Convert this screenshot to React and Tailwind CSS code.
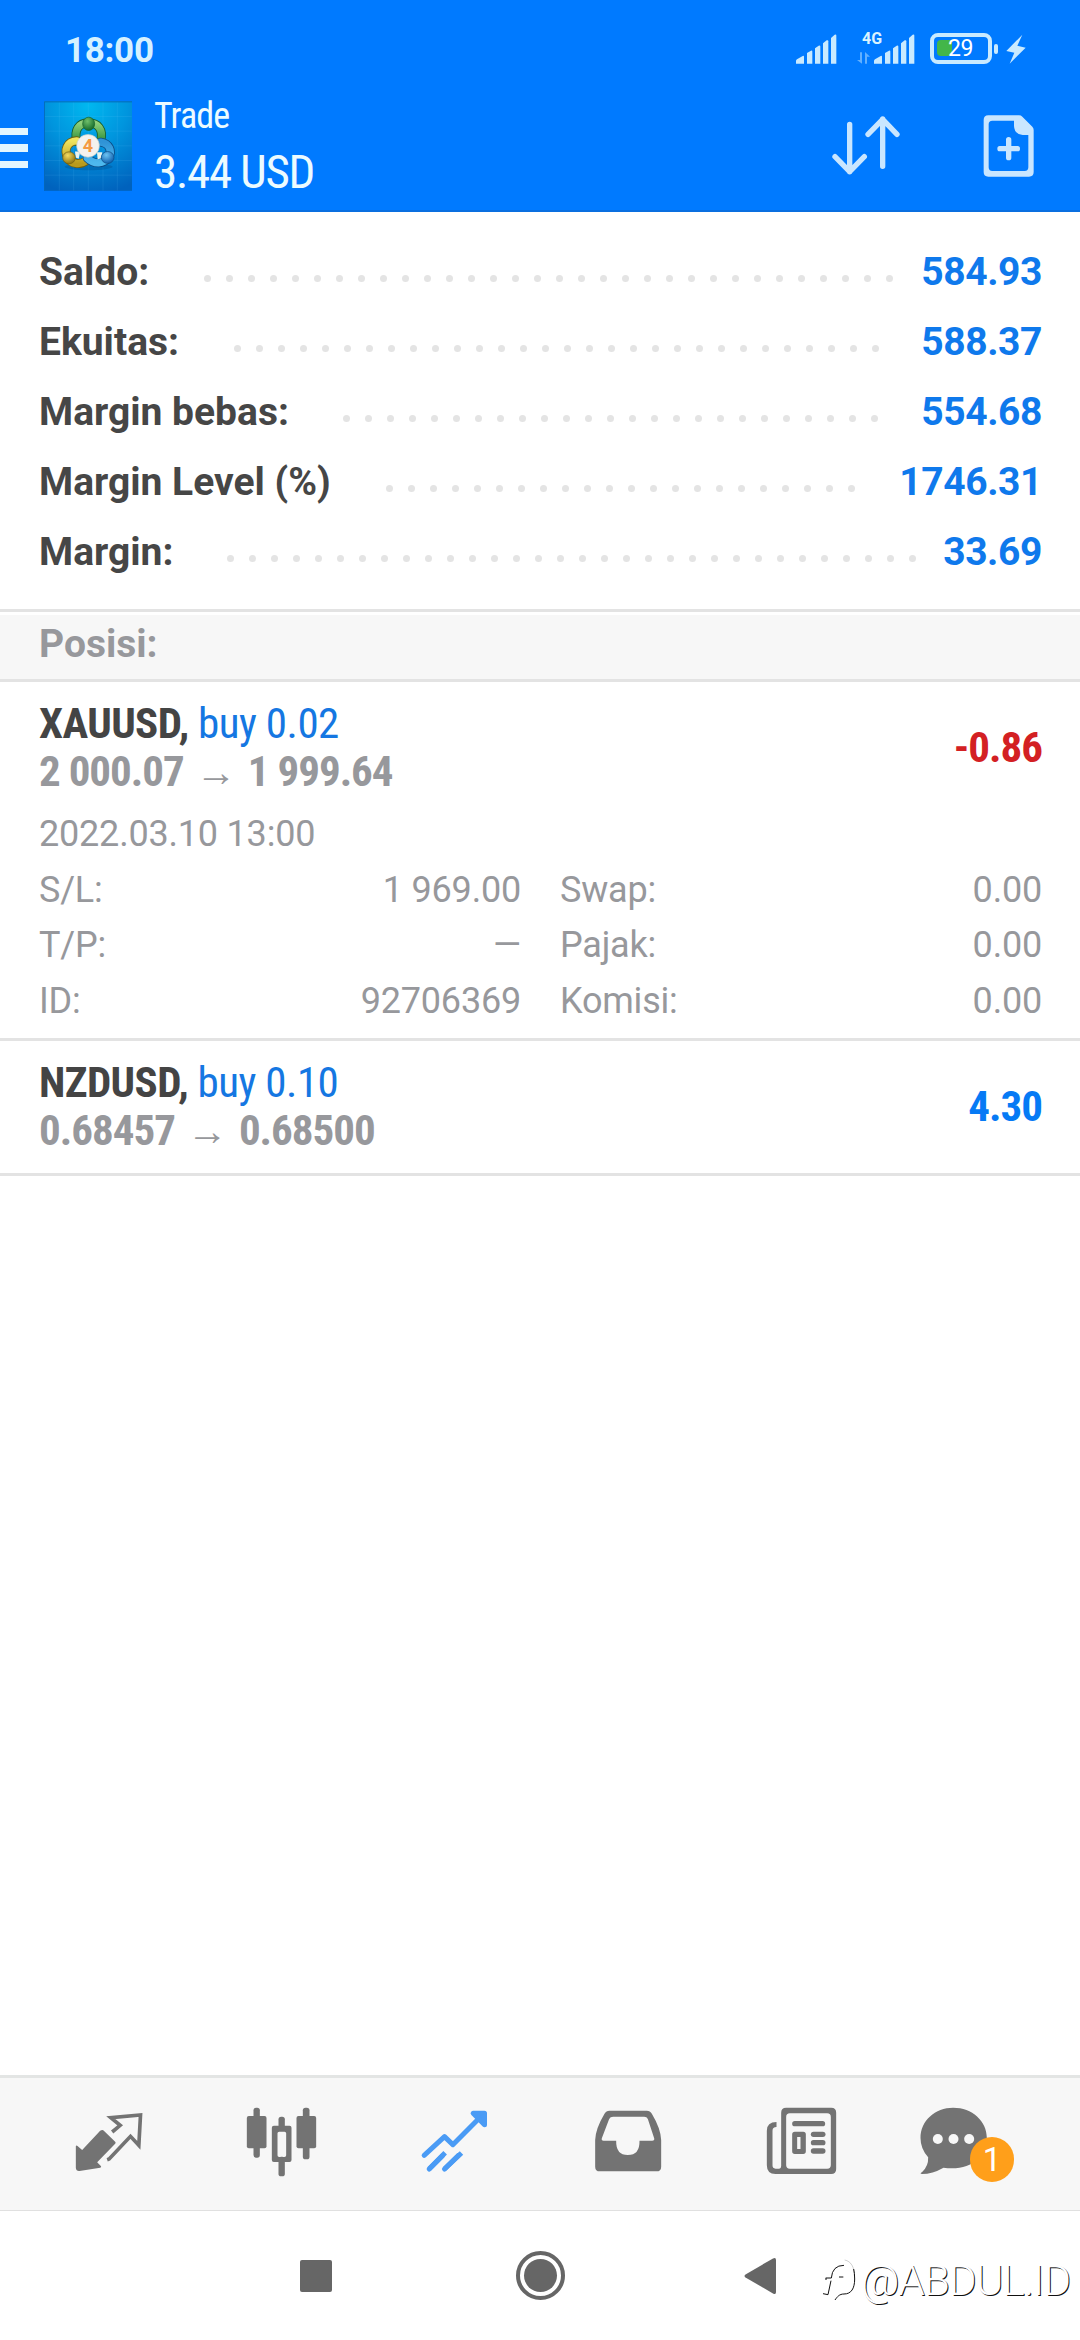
import clsx from "clsx";

const summary = [
  { label: "Saldo:", value: "584.93", dots: 32, labelWidth: "w-[165px]" },
  { label: "Ekuitas:", value: "588.37", dots: 30, labelWidth: "w-[195px]" },
  { label: "Margin bebas:", value: "554.68", dots: 25, labelWidth: "w-[304px]" },
  { label: "Margin Level (%)", value: "1746.31", dots: 22, labelWidth: "w-[347px]" },
  { label: "Margin:", value: "33.69", dots: 32, labelWidth: "w-[188px]" },
];

const positions = [
  {
    symbol: "XAUUSD",
    side: "buy 0.02",
    open: "2 000.07",
    current: "1 999.64",
    profit: "-0.86",
    time: "2022.03.10 13:00",
    details: [
      ["S/L:", "1 969.00", "Swap:", "0.00"],
      ["T/P:", "—", "Pajak:", "0.00"],
      ["ID:", "92706369", "Komisi:", "0.00"],
    ],
  },
  {
    symbol: "NZDUSD",
    side: "buy 0.10",
    open: "0.68457",
    current: "0.68500",
    profit: "4.30",
  },
];

function Signal() {
  return (
    <svg className="h-[30px] w-[41px]" viewBox="105 100 123 90" fill="#c9eaff">
      <path d="M105 189v-8q0-3 3-5l17-10q4-2 4 2v21z" />
      <path d="M138 189v-32l12-7q4-1 4 3v36z" />
      <path d="M162 189v-46l11-8q5-2 5 3v51z" />
      <path d="M186 189v-61l11-9q5-2 5 3v67z" />
      <path d="M210 189v-77l11-10q5-2 5 3v84z" />
    </svg>
  );
}

function StatusBar() {
  return (
    <div className="flex h-[80px] items-center pt-[20px] pl-[65px]">
      <span className="text-[35px] leading-none font-bold tracking-[-0.3px] text-[#d5f1ff]">18:00</span>
      <div className="mb-[5px] ml-auto flex h-[32px] items-end pr-[54px]">
        <Signal />
        <div className="relative ml-[20px] h-[32px] w-[22px]">
          <span className="absolute -top-[1px] left-[5px] text-[16px] leading-[16px] font-bold text-[#d9f3ff]">4G</span>
          <svg className="absolute bottom-0 left-0 h-[12px] w-[14px]" viewBox="288 153 42 36" fill="#62b0ff">
            <path d="M297 154h6v34l-15-11h9zM312 188h6v-21h9l-15-14z" />
          </svg>
        </div>
        <div className="-ml-[5px]">
          <Signal />
        </div>
        <div className="relative ml-[15px] flex h-[31px] w-[62px] items-center rounded-[8px] border-4 border-[#c9eaff] pl-[3px]">
          <div className="h-[16px] w-[15px] rounded-l-[4px] bg-[#43b649]" />
          <span className="absolute top-[2px] left-[14px] text-[23px] leading-[20px] tracking-[-0.5px] text-white">29</span>
        </div>
        <div className="mb-[10px] ml-[2px] h-[10px] w-[4px] rounded-[2px] bg-[#c9eaff]" />
        <svg className="ml-[8px] h-[30px] w-[20px]" viewBox="734 101 60 90" fill="#c9eaff">
          <path d="M783 103 735 152l24 5-14 33 48-48-25-6z" />
        </svg>
      </div>
    </div>
  );
}

function AppLogo() {
  return (
    <svg className="h-[90px] w-[88px]" viewBox="132 303 264 269">
      <defs>
        <radialGradient id="bg" cx="0.5" cy="0.05" r="1">
          <stop offset="0" stopColor="#00b8f0" />
          <stop offset="0.45" stopColor="#0095de" />
          <stop offset="1" stopColor="#0062bd" />
        </radialGradient>
        <linearGradient id="green" x1="0" y1="0" x2="0" y2="1">
          <stop offset="0" stopColor="#8fd07a" />
          <stop offset="1" stopColor="#2c8f3a" />
        </linearGradient>
        <linearGradient id="yellow" x1="0" y1="0" x2="0" y2="1">
          <stop offset="0" stopColor="#f0e45e" />
          <stop offset="1" stopColor="#b99a1c" />
        </linearGradient>
        <linearGradient id="blue" x1="0" y1="0" x2="0" y2="1">
          <stop offset="0" stopColor="#2f93d6" />
          <stop offset="1" stopColor="#4db8ee" />
        </linearGradient>
        <radialGradient id="ballGreen" cx="0.4" cy="0.3" r="0.7">
          <stop offset="0" stopColor="#6fc06a" />
          <stop offset="1" stopColor="#156b2c" />
        </radialGradient>
        <radialGradient id="ballYellow" cx="0.4" cy="0.3" r="0.7">
          <stop offset="0" stopColor="#f3dc62" />
          <stop offset="1" stopColor="#8f7410" />
        </radialGradient>
        <radialGradient id="ballBlue" cx="0.4" cy="0.3" r="0.7">
          <stop offset="0" stopColor="#6cc4f3" />
          <stop offset="1" stopColor="#0f5fae" />
        </radialGradient>
      </defs>
      <rect x="132" y="303" width="264" height="269" fill="url(#bg)" />
      <path
        d="M178 305v266M221 305v266M265 305v266M309 305v266M352 305v266M133 349h262M133 393h262M133 437h262M133 481h262M133 525h262"
        stroke="#6fd0ff"
        strokeOpacity="0.18"
        strokeWidth="2"
      />
      <path d="M133 571V305h263" fill="none" stroke="#0668b8" strokeWidth="3" />
      <ellipse cx="266" cy="500" rx="72" ry="10" fill="#00396e" opacity="0.25" />
      <g fill="none" strokeLinejoin="round" strokeLinecap="round">
        <path d="M230 424c-8-34 6-56 35-56s46 20 37 54" stroke="#175c2a" strokeWidth="27" />
        <path d="M230 424c-8-34 6-56 35-56s46 20 37 54" stroke="url(#green)" strokeWidth="22" />
        <path d="M230 422c-30 2-38 28-27 50 10 20 36 24 56 10" stroke="#6e6111" strokeWidth="27" />
        <path d="M230 422c-30 2-38 28-27 50 10 20 36 24 56 10" stroke="url(#yellow)" strokeWidth="22" />
        <path d="M302 426c26 4 36 26 24 46-14 20-44 22-64 2" stroke="#0c4c85" strokeWidth="27" />
        <path d="M302 426c26 4 36 26 24 46-14 20-44 22-64 2" stroke="url(#blue)" strokeWidth="22" />
      </g>
      <path d="M225 454h16l-5 22-9-4zM291 456h16l-4 18-10 4z" fill="#e9f3ee" />
      <ellipse cx="266" cy="371" rx="18" ry="20" fill="url(#ballGreen)" stroke="#14602a" strokeWidth="2" />
      <ellipse cx="207" cy="473" rx="19" ry="18" fill="url(#ballYellow)" stroke="#6e5c10" strokeWidth="2" />
      <ellipse cx="323" cy="472" rx="19" ry="18" fill="url(#ballBlue)" stroke="#0c4c85" strokeWidth="2" />
      <circle cx="264" cy="437" r="34" fill="#f4f2ee" stroke="#c9cfc9" strokeWidth="2" />
      <text
        x="264"
        y="456"
        textAnchor="middle"
        fontFamily="Roboto, sans-serif"
        fontSize="54"
        fontWeight="700"
        fill="#f59a42"
      >
        4
      </text>
    </svg>
  );
}

function TitleBar() {
  return (
    <div className="flex h-[132px] items-center">
      <div className="flex w-[28px] flex-col gap-[9px] pt-[4px]">
        <div className="h-[7.5px] bg-[#e2f6ff]" />
        <div className="h-[7.5px] bg-[#e2f6ff]" />
        <div className="h-[7.5px] bg-[#e2f6ff]" />
      </div>
      <div className="ml-[16px]">
        <AppLogo />
      </div>
      <div className="ml-[22px] flex flex-col pb-[5px] text-[#ecfbff] [font-stretch:75%]">
        <span className="text-[36px] leading-[56px] tracking-[-0.9px]">Trade</span>
        <span className="text-[47px] leading-[56px] tracking-[-1.3px]">3.44 USD</span>
      </div>
      <svg className="mb-[2px] ml-auto h-[60px] w-[70px]" viewBox="210 345 210 180" fill="none" stroke="#c9e6ff" strokeWidth="16" strokeLinecap="round" strokeLinejoin="round">
        <path d="M266 373v142M222 470l44 45 44-45M365 499V357M321 403l44-45 43 45" />
      </svg>
      <svg className="mr-[45px] ml-[82px] h-[62px] w-[52px]" viewBox="667 345 156 186">
        <path
          fillRule="evenodd"
          fill="#c9e6ff"
          d="M683 346h92q6 0 10 4l30 30q4 4 4 10v126q0 14-14 14H683q-14 0-14-14V360q0-14 14-14zM695 362q-11 0-11 11v129q0 11 11 11h97q11 0 11-11v-97h-17q-25-3-26-27v-16zM744 411q8 0 8 8v19h19q7 0 7 8t-7 8h-19v19q0 8-8 8t-8-8v-19h-19q-7 0-7-8t7-8h19v-19q0-8 8-8z"
        />
      </svg>
    </div>
  );
}

function SummaryRow({ label, value, dots, labelWidth }) {
  return (
    <div className="flex h-[70px] items-center text-[39px] leading-[70px] font-bold">
      <span className={clsx("whitespace-nowrap text-[#464646]", labelWidth)}>{label}</span>
      <div className="mt-[13px] flex gap-[15px]">
        {Array.from({ length: dots }, (_, i) => (
          <div key={i} className="size-[7px] rounded-full bg-[#e4e4e4]" />
        ))}
      </div>
      <span className="ml-auto tracking-[-0.4px] text-[#0f79ec]">{value}</span>
    </div>
  );
}

function Position({ position }) {
  const { symbol, side, open, current, profit, time, details } = position;
  const loss = profit.startsWith("-");

  return (
    <div className={clsx("border-b-3 border-[#e3e3e3] pt-[17px] pr-[38px] pl-[39px]", details ? "h-[359px]" : "h-[135px]")}>
      <div className="flex items-center justify-between text-[43px] leading-[48px] font-bold [font-stretch:75%]">
        <div>
          <div className="tracking-[-0.6px] text-[#444444]">
            {symbol}, <span className="font-normal tracking-[-0.5px] text-[#1577e2]">{side}</span>
          </div>
          <div className="flex tracking-[-1px] text-[#97989c]">
            <span>{open}</span>
            <span className="h-[48px] w-[64px] text-center text-[41px] leading-[51px]">→</span>
            <span>{current}</span>
          </div>
        </div>
        <span className={clsx("tracking-[-1px]", loss ? "text-[#d32023]" : "text-[#067af5]")}>{profit}</span>
      </div>
      {details && (
        <div className="mt-[12px] text-[36px] leading-[55.5px] tracking-[-0.2px] text-[#97989c]">
          <div>{time}</div>
          {details.map(([k1, v1, k2, v2]) => (
            <div key={k1} className="grid grid-cols-2 gap-x-[39px]">
              <div className="flex justify-between">
                <span>{k1}</span>
                <span>{v1}</span>
              </div>
              <div className="flex justify-between">
                <span>{k2}</span>
                <span>{v2}</span>
              </div>
            </div>
          ))}
        </div>
      )}
    </div>
  );
}

function TabBar() {
  const icon = "size-[80px]";
  return (
    <div className="flex h-[136px] items-center border-t-3 border-b border-t-[#e3e5e4] border-b-[#e0e0e0] bg-[#f7f7f7] px-[21px] text-[#737373] *:flex *:flex-1 *:justify-center">
      <div>
        <svg className={icon} viewBox="82.5 132 240 240" fill="currentColor">
          <path d="M186 210q2 0 4 2l34 33q3 3 0 6l-54 56 11 11q3 4-2 5l-62 10q-10 1-11-9v-65q1-4 5-1l14 12 54-58q3-2 7-2z" />
          <path
            d="M215 216 239 196 211 173 300 165 295 256 270 229 206 297 200 299"
            fill="none"
            stroke="currentColor"
            strokeWidth="11"
          />
        </svg>
      </div>
      <div>
        <svg className={icon} viewBox="601.5 132 240 240" fill="currentColor">
          <rect x="639" y="143" width="19" height="150" rx="8" />
          <rect x="619" y="168" width="59" height="97" rx="6" />
          <rect x="787" y="143" width="20" height="155" rx="8" />
          <rect x="768" y="168" width="59" height="97" rx="6" />
          <rect x="714" y="170" width="19" height="40" rx="8" />
          <rect x="714" y="290" width="19" height="59" rx="8" />
          <path fillRule="evenodd" d="M700 197h47q6 0 6 6v97q0 6-6 6h-47q-6 0-6-6v-97q0-6 6-6zM716 215q-5 0-5 5v66q0 5 5 5h16q5 0 5-5v-66q0-5-5-5z" />
        </svg>
      </div>
      <div>
        <svg className={icon} viewBox="1120.5 132 240 240" fill="none" stroke="#4a9bf5" strokeWidth="15" strokeLinejoin="round" strokeLinecap="round">
          <path d="M1151 286 1212 230 1237 254 1328 163" />
          <path d="M1298 160h34v34z" fill="#4a9bf5" />
          <path d="M1166 327 1214 278M1212 327 1263 279" strokeLinecap="butt" />
          <path d="M1166 327 1206 287M1212 327 1254 286" />
        </svg>
      </div>
      <div>
        <svg className={icon} viewBox="79.5 132 240 240" fill="currentColor">
          <path
            fillRule="evenodd"
            d="M147 152h112q10 0 15 9 27 45 28 79v80q0 14-14 14H118q-14 0-14-14v-80q1-34 28-79 5-9 15-9zM158 170q-9 0-12 7l-22 58q-2 7 5 7h38q-1 43 35 43t35-43h38q8 0 6-7l-19-58q-3-7-11-7z"
          />
        </svg>
      </div>
      <div>
        <svg className={icon} viewBox="598.5 132 240 240" fill="currentColor">
          <path fillRule="evenodd" d="M677 143h135q15 0 15 15v169q0 15-15 15H645q-26 0-26-26V212q0-26 29-26v15q-12 0-12 11v104q0 10 9 10h11q6 0 6-8V158q0-15 15-15zM688 160q-11 0-11 11v144q0 11 11 11h112q11 0 11-11V171q0-11-11-11z" />
          <rect x="695" y="183" width="99" height="16" rx="8" />
          <path fillRule="evenodd" d="M703 215h25q8 0 8 8v51q0 8-8 8h-25q-8 0-8-8v-51q0-8 8-8zM710 231v36h10v-36z" />
          <rect x="751" y="215" width="44" height="16" rx="8" />
          <rect x="751" y="240" width="44" height="16" rx="8" />
          <rect x="751" y="265" width="44" height="16" rx="8" />
        </svg>
      </div>
      <div className="relative">
        <svg className={icon} viewBox="1117.5 132 240 240" fill="currentColor" overflow="visible">
          <path d="M1178 143c57 0 101 40 101 90 0 56-50 102-130 90q-33 19-65 19c-6-1-2-4 1-6q19-17 18-44-23-26-23-58c0-52 44-91 98-91z" />
          <circle cx="1132" cy="237" r="15" fill="#f7f7f7" />
          <circle cx="1179" cy="237" r="15" fill="#f7f7f7" />
          <circle cx="1226" cy="237" r="15" fill="#f7f7f7" />
        </svg>
        <span className="absolute top-[33px] left-[84px] flex h-[45px] w-[44px] items-center justify-center rounded-full bg-[#ff9f1a] text-[33px] leading-none text-white">
          1
        </span>
      </div>
    </div>
  );
}

function SystemNav() {
  return (
    <div className="relative flex h-[129px] items-center bg-white">
      <div className="ml-[300px] size-[32px] rounded-[2px] bg-[#666666]" />
      <div className="ml-[184px] flex size-[49px] items-center justify-center rounded-full border-4 border-[#666666]">
        <div className="size-[33px] shrink-0 rounded-full bg-[#666666]" />
      </div>
      <svg className="ml-[179px] h-[38px] w-[32px]" viewBox="0 0 32 38" fill="#666666">
        <path d="M29 1.4Q32 0 32 3v32q0 3-3 1.400L1.500 20.500q-2-1.500 0-3z" />
      </svg>
      {/* user handle overlaid on the corner */}
      <div className="absolute top-[44px] left-[820px] flex items-center">
        <svg className="h-[44px] w-[38px] overflow-visible" viewBox="62 130 114 132" fill="none" strokeWidth="3" stroke="#111">
          <path d="M79 187h17q3-38 38-38M80 187v6M95 195l-9 42-15-3M163 160q3 12 3 30c0 28-10 45-32 45-14 0-20 8-27 18M119 184h13" />
          <path d="M136 133c20 4 29 22 29 48" strokeOpacity="0.2" />
        </svg>
        <span className="ml-[3px] text-[42px] leading-[52px] font-light tracking-[-0.8px] text-white [text-shadow:1px_1px_0.500px_#111]">
          @ABDUL.ID
        </span>
      </div>
    </div>
  );
}

export default function App() {
  return (
    <div className="flex h-[2340px] w-[1080px] flex-col overflow-hidden bg-white font-['Roboto',sans-serif]">
      <header className="h-[212px] shrink-0 bg-[#007aff] shadow-[inset_0_-2px_0_#0a6fe0]">
        <StatusBar />
        <TitleBar />
      </header>

      <main className="flex-1">
        <section className="h-[397px] pt-[25px] pr-[38px] pl-[39px]">
          {summary.map((row) => (
            <SummaryRow key={row.label} {...row} />
          ))}
        </section>
        <div className="border-y-3 border-[#e3e3e3] pt-[3px]">
          <h2 className="h-[64px] bg-[#f7f7f7] px-[39px] text-[39px] leading-[58px] font-bold text-[#97989c]">Posisi:</h2>
        </div>
        {positions.map((p) => (
          <Position key={p.symbol} position={p} />
        ))}
      </main>

      <TabBar />
      <SystemNav />
    </div>
  );
}
